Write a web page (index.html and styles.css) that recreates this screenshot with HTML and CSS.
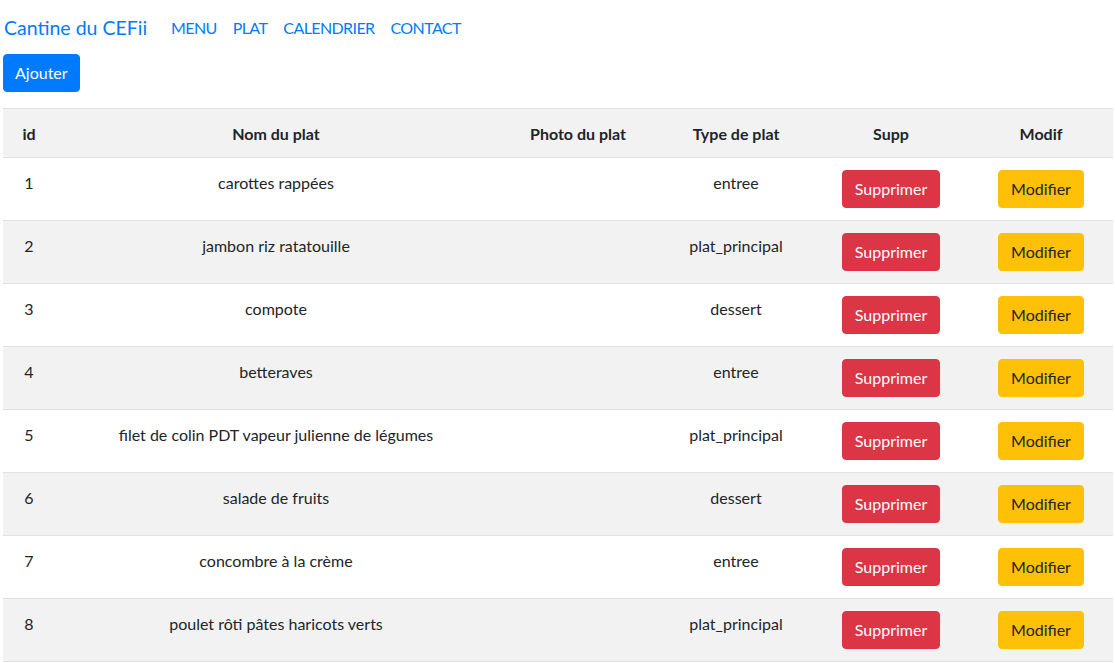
FILE: index.html
```html
<!DOCTYPE html>
<html lang="fr">
<head>
<meta charset="utf-8">
<title>Cantine du CEFii</title>
<link rel="stylesheet" href="styles.css">
</head>
<body>
<nav class="navbar">
  <a class="brand" href="#">Cantine du CEFii</a>
  <ul class="nav">
    <li><a class="nav-link" href="#">MENU</a></li>
    <li><a class="nav-link" href="#">PLAT</a></li>
    <li><a class="nav-link" href="#">CALENDRIER</a></li>
    <li><a class="nav-link" href="#">CONTACT</a></li>
  </ul>
</nav>
<div class="actions">
  <button class="btn btn-primary">Ajouter</button>
</div>
<table class="table">
  <colgroup>
    <col class="c-id"><col class="c-nom"><col class="c-photo"><col class="c-type"><col class="c-supp"><col class="c-modif">
  </colgroup>
  <thead>
    <tr><th>id</th><th>Nom du plat</th><th>Photo du plat</th><th>Type de plat</th><th>Supp</th><th>Modif</th></tr>
  </thead>
  <tbody>
    <tr><td>1</td><td>carottes rappées</td><td></td><td>entree</td><td><button class="btn btn-danger">Supprimer</button></td><td><button class="btn btn-warning">Modifier</button></td></tr>
    <tr><td>2</td><td>jambon riz ratatouille</td><td></td><td>plat_principal</td><td><button class="btn btn-danger">Supprimer</button></td><td><button class="btn btn-warning">Modifier</button></td></tr>
    <tr><td>3</td><td>compote</td><td></td><td>dessert</td><td><button class="btn btn-danger">Supprimer</button></td><td><button class="btn btn-warning">Modifier</button></td></tr>
    <tr><td>4</td><td>betteraves</td><td></td><td>entree</td><td><button class="btn btn-danger">Supprimer</button></td><td><button class="btn btn-warning">Modifier</button></td></tr>
    <tr><td>5</td><td>filet de colin PDT vapeur julienne de légumes</td><td></td><td>plat_principal</td><td><button class="btn btn-danger">Supprimer</button></td><td><button class="btn btn-warning">Modifier</button></td></tr>
    <tr><td>6</td><td>salade de fruits</td><td></td><td>dessert</td><td><button class="btn btn-danger">Supprimer</button></td><td><button class="btn btn-warning">Modifier</button></td></tr>
    <tr><td>7</td><td>concombre à la crème</td><td></td><td>entree</td><td><button class="btn btn-danger">Supprimer</button></td><td><button class="btn btn-warning">Modifier</button></td></tr>
    <tr><td>8</td><td>poulet rôti pâtes haricots verts</td><td></td><td>plat_principal</td><td><button class="btn btn-danger">Supprimer</button></td><td><button class="btn btn-warning">Modifier</button></td></tr>
  </tbody>
</table>
</body>
</html>
```
FILE: styles.css
```css
* { box-sizing: border-box; }
body {
  margin: 0;
  font-family: Lato, "Noto Sans", sans-serif;
  font-size: 16px;
  line-height: 24px;
  color: #212529;
  background: #fff;
}
a { text-decoration: none; color: #007bff; }
.navbar {
  display: flex;
  align-items: center;
  padding: 8px 0 6px 4px;
}
.brand {
  font-size: 19.5px;
  line-height: 30px;
  padding: 5px 0;
  margin-right: 16px;
}
.nav {
  display: flex;
  list-style: none;
  margin: 0;
  padding: 0;
}
.nav-link {
  display: block;
  padding: 8px;
  letter-spacing: -0.6px;
}
.actions {
  padding-left: 3px;
  margin-bottom: 16px;
}
.btn {
  font-family: inherit;
  font-size: 16px;
  line-height: 24px;
  padding: 6px 12px;
  border: 1px solid transparent;
  border-radius: 4px;
  cursor: pointer;
}
.btn-primary { background: #007bff; border-color: #007bff; color: #fff; padding: 6px 11px; }
.btn-danger { background: #dc3545; border-color: #dc3545; color: #fff; }
.btn-warning { background: #ffc107; border-color: #ffc107; color: #212529; }
.table {
  margin-left: 3px;
  width: 1110px;
  border-collapse: collapse;
  table-layout: fixed;
}
.c-id { width: 52px; }
.c-nom { width: 442px; }
.c-photo { width: 162px; }
.c-type { width: 154px; }
.c-supp { width: 156px; }
.c-modif { width: 144px; }
.table th, .table td {
  text-align: center;
  vertical-align: top;
  border-top: 1px solid #dee2e6;
}
.table td { padding: 13px 12px 12px; }
.table th { font-weight: 700; padding: 13px 12px 11px; }
.table thead tr { background: #f2f2f2; }
.table tbody tr:nth-child(even) { background: #f2f2f2; }
.table tbody tr:last-child td { border-bottom: 1px solid #dee2e6; }
.table td .btn { margin-top: -1px; }
```
